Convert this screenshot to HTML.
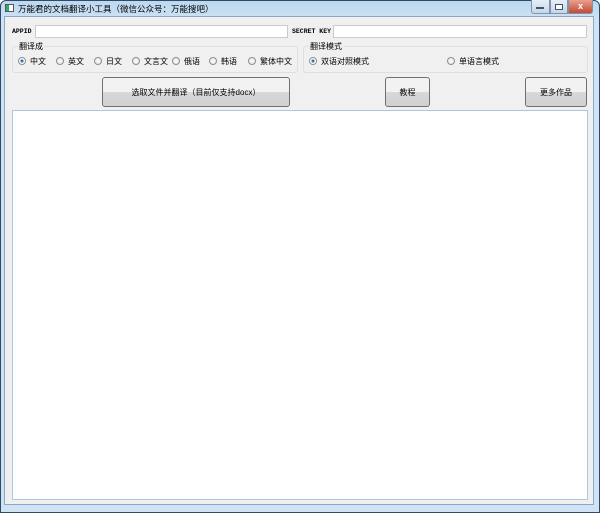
<!DOCTYPE html>
<html><head><meta charset="utf-8"><style>
*{margin:0;padding:0;box-sizing:border-box}
body{width:600px;height:513px;position:relative;overflow:hidden;font-family:"Liberation Sans","Noto Sans CJK SC",sans-serif;font-size:8px;color:#000;background:#fff}
.frame{position:absolute;left:0;top:0;width:600px;height:513px;background:linear-gradient(#bcd8ef,#cfe3f4 20px,#cfe3f4);border:1px solid #2e4a68;border-radius:6px 6px 0 0}
.client{position:absolute;left:4px;top:16px;width:590px;height:489px;background:#f0f0f0;border:1px solid #8aa9c8}
.title{position:absolute;left:18px;top:3px;font-size:8.5px;color:#000}
.icon{position:absolute;left:5px;top:4px;width:9px;height:8px;border:1px solid #555;background:#fff}
.icon:before{content:"";position:absolute;left:0;top:0;width:3px;height:6px;background:#3a6}
.ctl{position:absolute;top:0;height:14px;border:1px solid #7f94aa;border-top:none}
.a{position:absolute}
.lbl{font-family:"Liberation Mono",monospace;font-size:6.5px;font-weight:bold}
.inp{position:absolute;height:13px;background:#fff;border:1px solid #c8ccd0}
.grp{position:absolute;border:1px solid #dcdfe3;border-radius:3px;height:27px}
.gt{position:absolute;top:-6px;left:5px;background:#f0f0f0;padding:0 1px}
.r{position:absolute;top:9px;white-space:nowrap}
.r i{display:inline-block;width:8px;height:8px;border-radius:50%;border:1px solid #8e8f8f;background:radial-gradient(#fff,#dde);vertical-align:-1px;margin-right:4px}
.r i.on{background:radial-gradient(#2a78c0 30%,#fff 45%)}
.btn{position:absolute;border:1px solid #707070;border-radius:3px;background:linear-gradient(#f2f2f2 50%,#d8d8d8 51%,#d0d0d0);display:flex;align-items:center;justify-content:center}
.txt{position:absolute;left:12px;top:110px;width:576px;height:390px;background:#fff;border:1px solid #abc6dd}
</style></head><body>
<div class="frame"></div>
<div class="icon"></div>
<div class="title">万能君的文档翻译小工具（微信公众号：万能搜吧）</div>
<div class="ctl" style="left:531px;width:19px;border-radius:0 0 0 3px;background:linear-gradient(#e6eef7,#c6d6e8)"></div>
<div class="ctl" style="left:550px;width:18px;background:linear-gradient(#e6eef7,#c6d6e8)"></div>
<div class="ctl" style="left:568px;width:25px;border-radius:0 0 3px 0;background:linear-gradient(#e8a090,#c44a32);color:#fff;font-size:9px;text-align:center;font-weight:bold;line-height:12px">x</div>
<div class="a" style="left:536px;top:7px;width:8px;height:2px;background:#fff;border:1px solid #456"></div>
<div class="a" style="left:555px;top:4px;width:8px;height:6px;border:1px solid #456;background:#fff"></div>
<div class="client"></div>
<div class="a lbl" style="left:12px;top:28px">APPID</div>
<div class="inp" style="left:35px;top:25px;width:253px"></div>
<div class="a lbl" style="left:292px;top:28px">SECRET KEY</div>
<div class="inp" style="left:333px;top:25px;width:254px"></div>
<div class="grp" style="left:12px;top:46px;width:286px"><span class="gt">翻译成</span>
<span class="r" style="left:5px"><i class="on"></i>中文</span>
<span class="r" style="left:43px"><i></i>英文</span>
<span class="r" style="left:81px"><i></i>日文</span>
<span class="r" style="left:119px"><i></i>文言文</span>
<span class="r" style="left:159px"><i></i>俄语</span>
<span class="r" style="left:196px"><i></i>韩语</span>
<span class="r" style="left:235px"><i></i>繁体中文</span>
</div>
<div class="grp" style="left:303px;top:46px;width:285px"><span class="gt">翻译模式</span>
<span class="r" style="left:5px"><i class="on"></i>双语对照模式</span>
<span class="r" style="left:143px"><i></i>单语言模式</span>
</div>
<div class="btn" style="left:102px;top:77px;width:188px;height:30px">选取文件并翻译（目前仅支持docx）</div>
<div class="btn" style="left:385px;top:77px;width:45px;height:30px">教程</div>
<div class="btn" style="left:525px;top:77px;width:62px;height:30px">更多作品</div>
<div class="txt"></div>
</body></html>
